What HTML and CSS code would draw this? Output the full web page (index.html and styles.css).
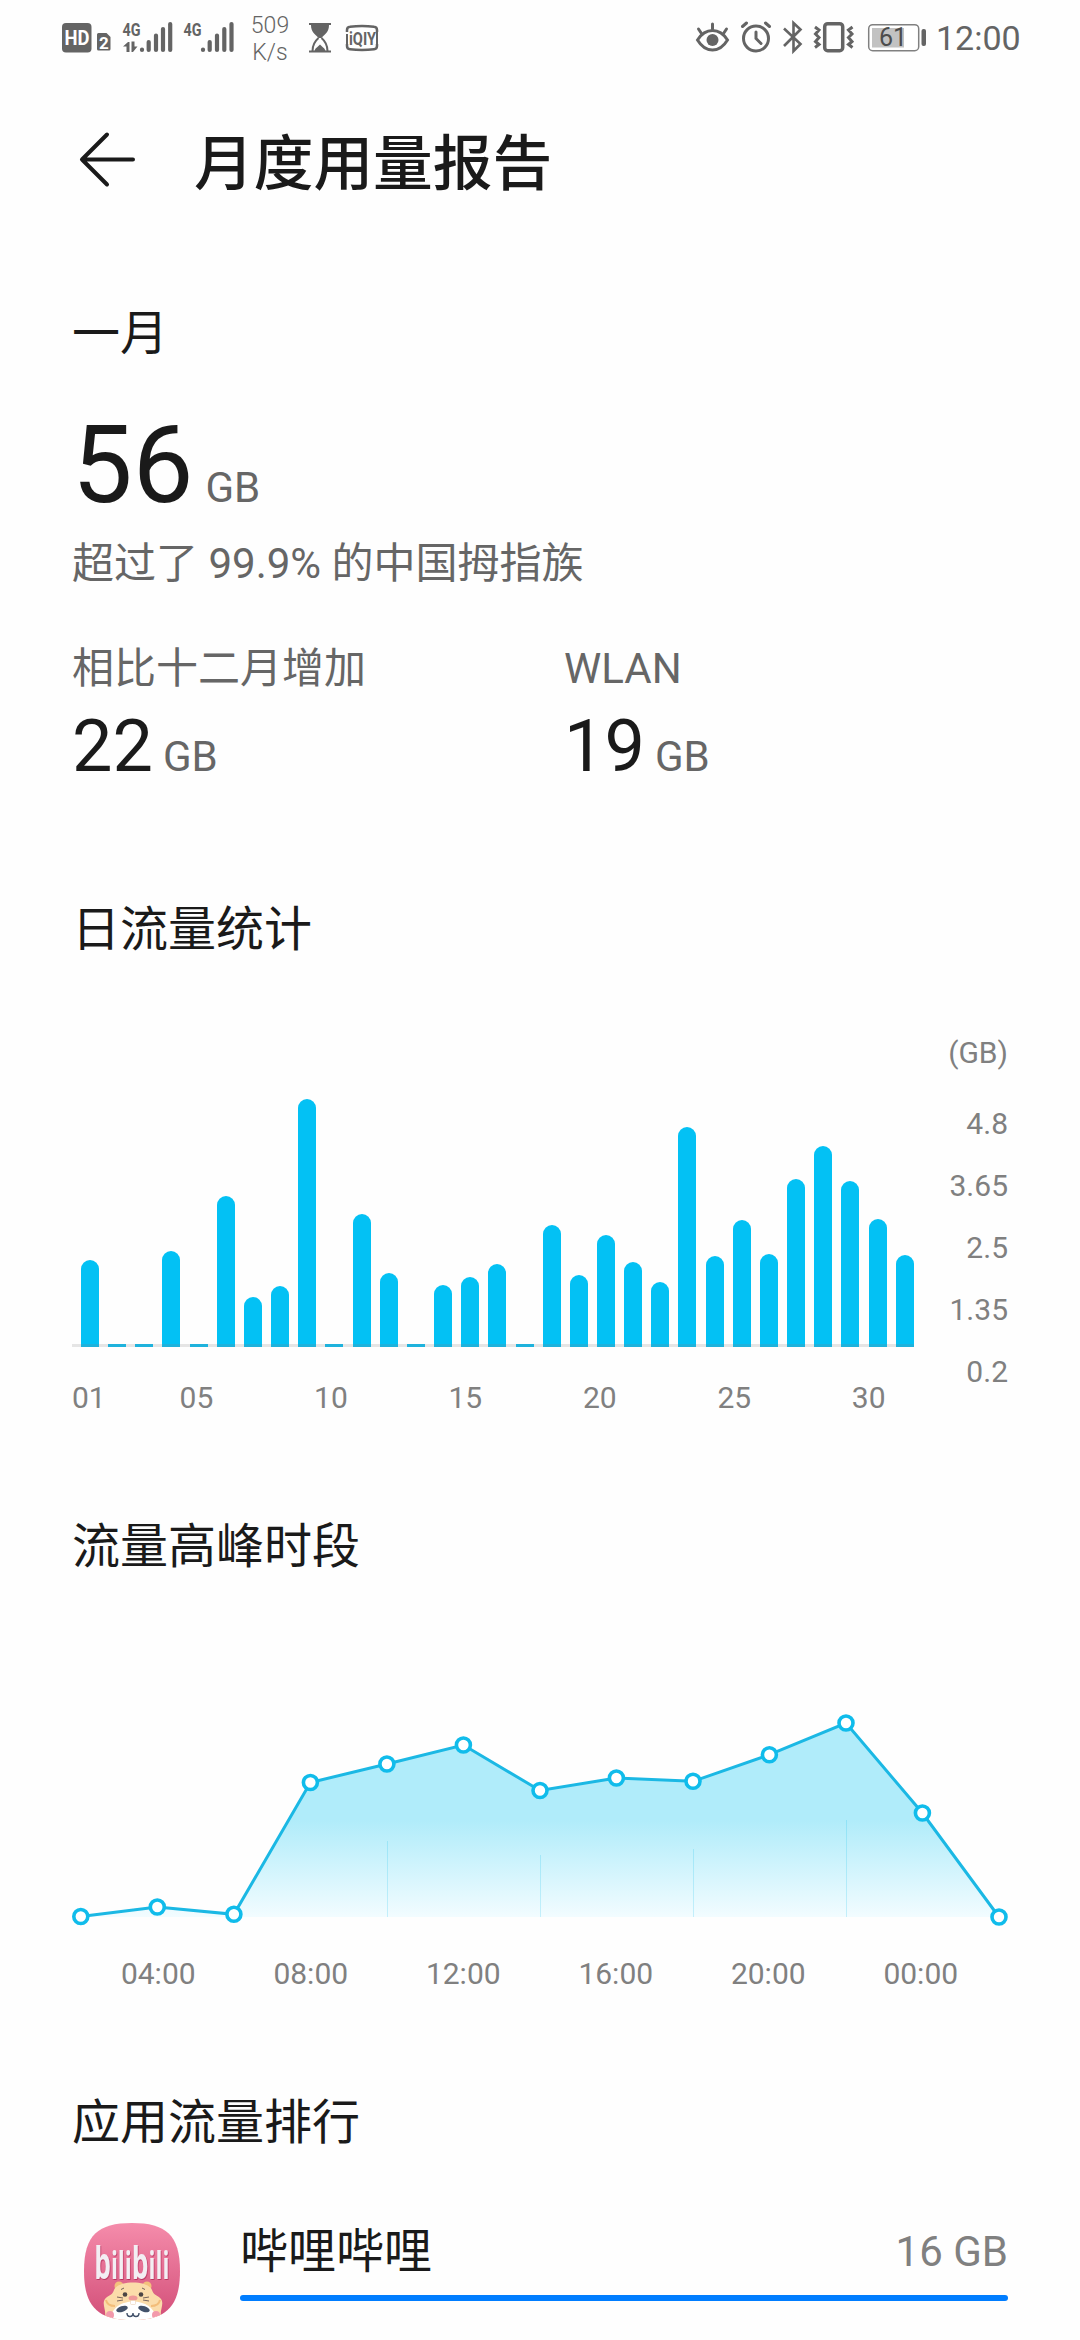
FILE: index.html
```
<!DOCTYPE html>
<html lang="zh-CN">

<head>
  <meta charset="UTF-8">
  <meta name="viewport" content="width=device-width, initial-scale=1.0">
  <title>月度用量报告</title>
  <link rel="stylesheet" href="styles.css">
</head>

<body>
  <div class="status-bar">
    <svg class="status-left" width="180" height="80" viewBox="60 0 180 80">
      <rect x="62" y="23" width="29.5" height="29.5" rx="4" fill="#646464"/>
      <text class="hd" x="64.5" y="45" textLength="25" lengthAdjust="spacingAndGlyphs">HD</text>
      <path d="M98.5 33h8l4 4v12a1.500 1.500 0 0 1-1.500 1.500h-10.500a1.500 1.500 0 0 1-1.500-1.500v-14.500a1.500 1.500 0 0 1 1.500-1.500z" fill="#646464"/>
      <text class="sim" x="99" y="48.500">2</text>
      <text class="net" x="122.500" y="35.500" textLength="18" lengthAdjust="spacingAndGlyphs">4G</text>
      <path d="M123 46.500l5-4.500h1.500v10h-3v-5.500zM131.500 41.500h3v5h3l-4.500 5.500h-1.500z" fill="#646464"/>
      <g class="bars">
        <path d="M142 49.500v.5M148.700 42v8M156 35.500v14.500M163 29v21M170.200 24v26"/>
        <path d="M203 49.500v.5M209.700 42v8M217 35.500v14.500M224.300 29v21M231.500 24v26"/>
      </g>
      <text class="net" x="183.500" y="35.500" textLength="18" lengthAdjust="spacingAndGlyphs">4G</text>
    </svg>
    <div class="speed">509<br>K/s</div>
    <svg class="status-apps" width="92" height="80" viewBox="308 0 92 80">
      <path d="M309 23h22v2h-22zM309 50.500h22v2h-22z" fill="#646464"/>
      <path d="M311 25h18c0 7-4 9-7.500 13h-3c-3.500-4-7.500-6-7.500-13z" fill="#646464"/>
      <path d="M318.500 38c-3.500 3-6 6-6 13M321.500 38c3.500 3 6 6 6 13" fill="none" stroke="#646464" stroke-width="2"/>
      <path d="M314.500 51c1-3.500 3.500-4 5.500-6.500 2 2.500 4.500 3 5.500 6.500z" fill="#646464"/>
      <path d="M347 32v-2q0-3 3-3.300 12-1.600 24 0 3 .3 3 3.300v2M347 44v2q0 3 3 3.300 12 1.600 24 0 3-.3 3-3.300v-2" fill="none" stroke="#646464" stroke-width="2.500"/>
      <path d="M347 30v2M347 34v11M377 30v15" stroke="#646464" stroke-width="2"/>
      <text class="qiy" x="349" y="45" textLength="27" lengthAdjust="spacingAndGlyphs">iQIY</text>
    </svg>
    <svg class="status-right" width="238" height="80" viewBox="692 0 238 80">
      <g fill="none" stroke="#646464" stroke-width="3" stroke-linecap="round">
        <path d="M696.500 40q6-9.500 15-9.500t15 9.500q-6 10-15 10t-15-10z"/>
        <path d="M711.500 24v5M697.500 29l3 4.500M725.500 29l-3 4.500"/>
        <circle cx="755" cy="38.500" r="12.500"/>
        <path d="M755 32v6.500l5 5M741.500 26.500l4-3.500M768.500 26.500l-4-3.500"/>
      </g>
      <circle cx="711.500" cy="40" r="6" fill="#646464"/>
      <path d="M783 28.500l16.500 15.500-7 7v-28l7 6.500-16.500 16.500" fill="none" stroke="#646464" stroke-width="2.600"/>
      <rect x="823.700" y="23.700" width="18" height="27" rx="3" fill="none" stroke="#646464" stroke-width="3.500"/>
      <path d="M814 27l4 3-3.500 4 3.500 3.500-3.500 4 3.500 3-4 3M851.500 27l-4 3 3.500 4-3.500 3.500 3.500 4-3.500 3 4 3" fill="none" stroke="#646464" stroke-width="3"/>
      <rect x="867.700" y="24.700" width="50" height="26" rx="4" fill="#fff" stroke="#808080" stroke-width="1.500"/>
      <rect x="871" y="28" width="32" height="19.500" fill="#c2c2c2"/>
      <text class="battery" x="878" y="46">61</text>
      <rect x="920.500" y="29" width="4.500" height="17" rx="2" fill="#646464"/>
    </svg>
    <div class="clock">12:00</div>
  </div>

  <header>
    <svg class="back" width="60" height="60" viewBox="0 0 60 60">
      <path d="M31 6.500L6 31.500l25 25M6 31.500h51" fill="none" stroke="#1a1a1a" stroke-width="4" stroke-linecap="round" stroke-linejoin="round"/>
    </svg>
    <h1>月度用量报告</h1>
  </header>

  <main>
    <section class="summary">
      <h2>一月</h2>
      <div class="total"><span class="number">56</span><span class="unit">GB</span></div>
      <p class="rank">超过了 99.9% 的中国拇指族</p>
      <div class="columns">
        <div class="column">
          <p>相比十二月增加</p>
          <div class="value"><span class="number">22</span><span class="unit">GB</span></div>
        </div>
        <div class="column">
          <p>WLAN</p>
          <div class="value"><span class="number">19</span><span class="unit">GB</span></div>
        </div>
      </div>
    </section>

    <section class="daily">
      <h2>日流量统计</h2>
      <div class="daily-chart">
        <div class="plot">
          <div class="columns-area" id="barras"></div>
          <div class="days" id="dias"></div>
        </div>
        <div class="scale">
          <span class="scale-unit">(GB)</span>
          <span>4.8</span>
          <span>3.65</span>
          <span>2.5</span>
          <span>1.35</span>
          <span>0.2</span>
        </div>
      </div>
    </section>

    <section class="peak">
      <h2>流量高峰时段</h2>
      <svg class="peak-chart" width="936" height="240" viewBox="72 1700 936 240">
        <defs>
          <linearGradient id="area" gradientUnits="userSpaceOnUse" x1="0" y1="1723" x2="0" y2="1917">
            <stop offset="0" stop-color="#b0ecfa"/>
            <stop offset="0.5" stop-color="#b0ecfa"/>
            <stop offset="1" stop-color="#f2fcff"/>
          </linearGradient>
        </defs>
        <path d="M80.800 1917L157.300 1907L233.900 1914.300L310.400 1782.500L386.900 1764L463.400 1745L540 1790.500L616.400 1778L693 1781.300L769.400 1754.700L846 1723L922.400 1813L999 1917z" fill="url(#area)"/>
        <path d="M387.500 1841v76M540.500 1855v62M693.500 1849v68M846.500 1820v97" stroke="#10bceb" stroke-opacity="0.2"/>
        <polyline points="80.800,1916.500 157.300,1907 233.900,1914.300 310.400,1782.500 386.900,1764 463.400,1745 540,1790.500 616.400,1778 693,1781.300 769.400,1754.700 846,1723 922.400,1813 999,1917" fill="none" stroke="#1bb8e4" stroke-width="3"/>
        <g class="dots">
          <circle cx="80.800" cy="1916.500" r="7"/>
          <circle cx="157.300" cy="1907" r="7"/>
          <circle cx="233.900" cy="1914.300" r="7"/>
          <circle cx="310.400" cy="1782.500" r="7"/>
          <circle cx="386.900" cy="1764" r="7"/>
          <circle cx="463.400" cy="1745" r="7"/>
          <circle cx="540" cy="1790.500" r="7"/>
          <circle cx="616.400" cy="1778" r="7"/>
          <circle cx="693" cy="1781.300" r="7"/>
          <circle cx="769.400" cy="1754.700" r="7"/>
          <circle cx="846" cy="1723" r="7"/>
          <circle cx="922.400" cy="1813" r="7"/>
          <circle cx="999" cy="1917" r="7"/>
        </g>
      </svg>
      <div class="hours">
        <span>04:00</span>
        <span>08:00</span>
        <span>12:00</span>
        <span>16:00</span>
        <span>20:00</span>
        <span>00:00</span>
      </div>
    </section>

    <section class="apps">
      <h2>应用流量排行</h2>
      <div class="app">
        <svg class="app-icon" width="96" height="98" viewBox="0 0 96 98">
          <defs>
            <linearGradient id="pink" x1="0" y1="0" x2="0" y2="1">
              <stop offset="0" stop-color="#f58cab"/>
              <stop offset="1" stop-color="#d24e78"/>
            </linearGradient>
            <clipPath id="shape">
              <path d="M48 0C82 0 96 12 96 48S82 97 48 97 0 84 0 48 14 0 48 0z"/>
            </clipPath>
          </defs>
          <g clip-path="url(#shape)">
            <rect width="96" height="98" fill="url(#pink)"/>
            <text class="logo-text" transform="scale(.6 1)" x="17" y="56.500"><tspan class="logo-b">b</tspan><tspan>ili</tspan><tspan class="logo-b">b</tspan><tspan>ili</tspan></text>
            <circle cx="35" cy="63" r="4.500" fill="#f3c27c"/>
            <circle cx="63" cy="63" r="4.500" fill="#f3c27c"/>
            <path d="M20 98C24 88 17 82 21 76C24 72 28 73 30 67C34 57 64 57 68 67C70 73 74 72 77 76C81 82 74 88 78 98z" fill="#fbdcaa"/>
            <path d="M22 77c1 5 5 6 9 6M76 77c-1 5-5 6-9 6" fill="none" stroke="#f3bd79" stroke-width="2"/>
            <circle cx="41" cy="71.500" r="2.300" fill="#4b4544"/>
            <circle cx="57" cy="71.500" r="2.300" fill="#4b4544"/>
            <path d="M40 65l-3 1.500M58 65l3 1.500M33 74l6 1M33 78l6-1M65 74l-6 1M65 78l-6-1" stroke="#76635b" stroke-width="1"/>
            <ellipse cx="49" cy="75" rx="4.500" ry="2.500" fill="#ef9999"/>
            <path d="M26 98C27 72 71 72 73 98z" fill="#fff"/>
            <rect x="46.500" y="77.500" width="5" height="4" rx="1" fill="#fff" stroke="#e6c5a6" stroke-width=".5"/>
            <circle cx="26" cy="92" r="4" fill="#f399ab"/>
            <circle cx="72" cy="92" r="4" fill="#f399ab"/>
            <ellipse cx="38" cy="86" rx="6" ry="2.800" transform="rotate(-18 38 86)" fill="#43526a"/>
            <ellipse cx="60" cy="86" rx="6" ry="2.800" transform="rotate(18 60 86)" fill="#43526a"/>
            <path d="M43 90q0 3.500 3 3.500t3-3.500q0 3.500 3 3.500t3-3.500" fill="none" stroke="#43526a" stroke-width="1.400"/>
          </g>
        </svg>
        <div class="app-info">
          <div class="app-line">
            <span class="app-name">哔哩哔哩</span>
            <span class="app-usage">16 GB</span>
          </div>
          <div class="app-bar"></div>
        </div>
      </div>
    </section>
  </main>

  <script>
    const barras = document.getElementById('barras');
    const dias = document.getElementById('dias');

    const alturas = [
      87, 3, 3, 95.7, 3, 151.3, 50, 61.3, 248.3, 3,
      133, 74, 3, 62, 70, 82.7, 3, 122, 71.7, 112,
      85, 65.3, 220.3, 91.3, 126.7, 92.7, 168.3, 201, 165.7, 128.3, 92
    ];

    alturas.forEach((altura, i) => {
      const barra = document.createElement('div');
      barra.className = altura > 3 ? 'bar' : 'bar empty';
      barra.style.height = altura + 'px';
      barras.appendChild(barra);

      const dia = document.createElement('span');
      if (i === 0 || (i + 1) % 5 === 0) {
        dia.textContent = String(i + 1).padStart(2, '0');
      }
      dias.appendChild(dia);
    });
  </script>
</body>

</html>
```
FILE: styles.css
```
* {
  box-sizing: border-box;
}
body {
  font-family: Roboto, "Noto Sans CJK SC", sans-serif;
  background-color: #fefefe;
  color: #1a1a1a;
  margin: 0;
  height: 2340px;
  overflow: hidden;
}
h1, h2, p {
  margin: 0;
}
svg {
  display: block;
  flex: none;
}

/* status bar */
.status-bar {
  display: flex;
  height: 80px;
  padding-left: 60px;
  color: #646464;
}
.speed {
  width: 58px;
  margin-left: 1px;
  padding-top: 12px;
  text-align: center;
  font-size: 23px;
  font-weight: 300;
  line-height: 27px;
}
.status-apps {
  margin-left: 9px;
}
.status-right {
  margin-left: 293px;
}
.clock {
  margin-left: 5px;
  font-size: 34px;
  line-height: 77px;
}
.status-bar text {
  font-family: Roboto, sans-serif;
  font-weight: bold;
  fill: #646464;
}
.status-bar .hd {
  font-size: 21px;
  fill: #fff;
}
.status-bar .sim {
  font-size: 17px;
  fill: #fff;
}
.status-bar .net {
  font-size: 19px;
}
.status-bar .qiy {
  font-size: 19px;
}
.status-bar .battery {
  font-size: 25px;
  font-weight: normal;
  fill: #4c4c4c;
}
.bars {
  fill: none;
  stroke: #646464;
  stroke-width: 4.2;
  stroke-linecap: round;
}

/* title */
header {
  display: flex;
  align-items: flex-start;
  height: 224px;
  padding: 45px 76px 0;
}
.back {
  margin-top: 3px;
}
h1 {
  margin-left: 58px;
  font-size: 59.7px;
  font-weight: 500;
  line-height: 80px;
}

main {
  padding: 0 72px;
}
h2 {
  font-size: 48px;
  font-weight: normal;
  line-height: 60px;
}

/* summary */
.number {
  color: #1a1a1a;
}
.unit {
  font-size: 42px;
  color: #666;
}
.total, .value {
  display: flex;
  align-items: baseline;
  gap: 10px;
}
.total {
  margin-top: 47px;
  height: 108px;
  font-size: 108px;
  line-height: 108px;
  gap: 12px;
}
.rank, .column p {
  font-size: 42px;
  line-height: 50px;
  color: #666;
}
.rank {
  margin-top: 20px;
}
.columns {
  display: flex;
  margin-top: 55px;
}
.column {
  flex: none;
  width: 492px;
}
.column:last-child {
  width: 444px;
}
.value {
  margin-top: 17px;
  height: 72px;
  font-size: 72px;
  line-height: 72px;
}

/* daily bars */
.daily {
  margin-top: 117px;
}
.daily-chart {
  display: flex;
  justify-content: space-between;
  height: 443px;
  font-size: 30px;
  color: #808080;
}
.plot {
  width: 842px;
  padding-top: 87px;
}
.columns-area {
  display: flex;
  align-items: flex-end;
  justify-content: space-between;
  height: 300px;
  padding-left: 9px;
  background: linear-gradient(#e5e5e5, #e5e5e5) bottom / 100% 3px no-repeat;
}
.bar {
  width: 18px;
  border-radius: 9px 9px 0 0;
  background: linear-gradient(#1eb2dc, #1eb2dc) bottom / 100% 3px no-repeat #03c1f4;
}
.bar.empty {
  border-radius: 0;
}
.days {
  display: flex;
  margin-top: 31px;
  line-height: 40px;
}
.days span {
  flex: none;
  width: 26.9px;
}
.scale {
  display: flex;
  flex-direction: column;
  padding-top: 62px;
  text-align: right;
  line-height: 62px;
}
.scale-unit {
  margin-bottom: 9px;
}

/* peak hours */
.peak {
  margin-top: 114px;
}
.peak-chart {
  margin-top: 123px;
}
.dots {
  fill: #fff;
  stroke: #10bceb;
  stroke-width: 3.6;
}
.hours {
  display: flex;
  margin: 14px 0 0 10px;
  font-size: 30px;
  line-height: 40px;
  color: #808080;
}
.hours span {
  width: 152.5px;
  text-align: center;
}

/* app ranking */
.apps {
  margin-top: 99px;
}
.app {
  display: flex;
  margin-top: 69px;
  padding-left: 12px;
}
.app-icon {
  margin-top: 1px;
}
.app-info {
  flex: 1;
  margin-left: 60px;
}
.app-line {
  display: flex;
  justify-content: space-between;
  line-height: 60px;
}
.app-name {
  font-size: 48px;
}
.app-usage {
  font-size: 42px;
  color: #808080;
}
.app-bar {
  height: 6px;
  margin-top: 13px;
  border-radius: 3px;
  background-color: #007dff;
}
.logo-text {
  font-family: "Open Sans", sans-serif;
  font-size: 38px;
  font-weight: bold;
  fill: #f3eef3;
  filter: drop-shadow(1px 1px 0 #b83560);
}
.logo-b {
  font-size: 44px;
}
```
